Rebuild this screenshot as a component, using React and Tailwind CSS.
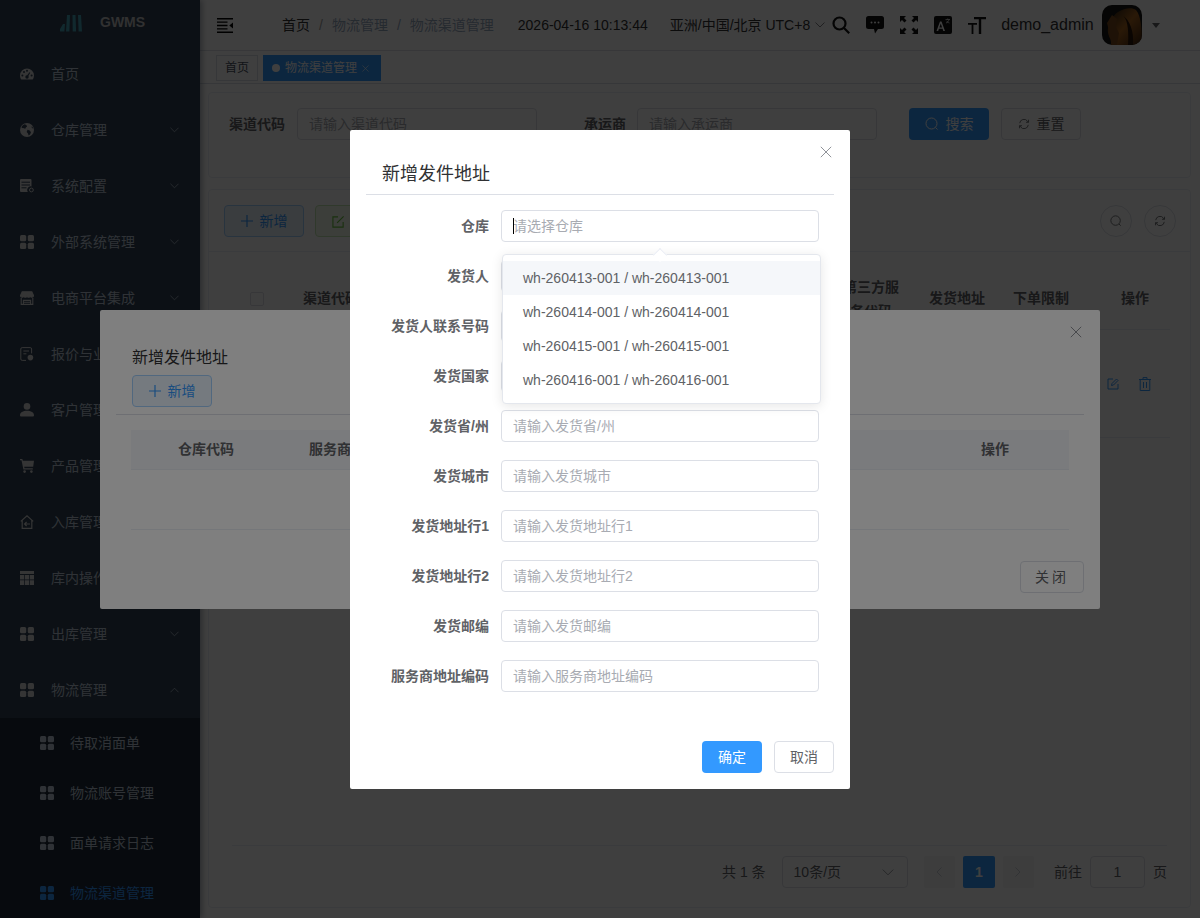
import React from "react";

const Grid = ({ className = "" }) => (
  <svg viewBox="0 0 14 14" className={className} fill="currentColor">
    <rect x="0" y="0" width="6.2" height="6.2" rx="1.5" />
    <rect x="7.8" y="0" width="6.2" height="6.2" rx="1.5" />
    <rect x="0" y="7.8" width="6.2" height="6.2" rx="1.5" />
    <rect x="7.8" y="7.8" width="6.2" height="6.2" rx="1.5" />
  </svg>
);
const Gauge = ({ className }) => (
  <svg viewBox="0 0 14 14" className={className}>
    <path fill="currentColor" d="M7 1.5a7 7 0 0 0-7 7c0 1.6.5 3 1.3 4h11.4A6.9 6.9 0 0 0 14 8.5a7 7 0 0 0-7-7z" />
    <g fill="#304155">
      <circle cx="2.4" cy="8.4" r="1" /><circle cx="4" cy="5" r="1" /><circle cx="7" cy="3.8" r="1" /><circle cx="11.6" cy="8.4" r="1" />
      <circle cx="7" cy="10" r="1.7" /><path d="M6.4 9.6l3-4.4.8.5-2.6 4.6z" />
    </g>
  </svg>
);
const Globe = ({ className }) => (
  <svg viewBox="0 0 14 14" className={className}>
    <circle cx="7" cy="7" r="7" fill="currentColor" />
    <path fill="#304155" d="M4.5 1.2C3 2 2 3 1.4 4.3c.8.7 1.7 1 2.5.8.5.6 1 .7 1.6.5l.3-1.2 1.3-.8L6.3 2zM7.5 6.8l2.2.6 1.3 1.8-1 2.4-1.4 1-.6-2.2-1.3-1.4zM11.5 3.5l1 .3.6 1.6-1.2-.5z" />
  </svg>
);
const Server = ({ className }) => (
  <svg viewBox="0 0 14 14" className={className}>
    <path fill="currentColor" d="M1 0h9.5a1 1 0 0 1 1 1v6.4a3.6 3.6 0 0 0-3.7 5.6H1a1 1 0 0 1-1-1V1a1 1 0 0 1 1-1z" />
    <path stroke="#304155" strokeWidth="1" d="M1.5 3.2h8.5M1.5 6h8.5M1.5 8.8h5" />
    <circle cx="11.4" cy="11" r="1.9" fill="none" stroke="currentColor" strokeWidth="1" />
  </svg>
);
const Shop = ({ className }) => (
  <svg viewBox="0 0 14 14" className={className} fill="none" stroke="currentColor" strokeWidth="1.1">
    <path fill="currentColor" d="M2.2.8h9.6L13.6 4.8a1.9 1.9 0 0 1-3.3.6 2 2 0 0 1-3.3 0 2 2 0 0 1-3.3 0A1.9 1.9 0 0 1 .4 4.8z" />
    <path d="M1.2 7v6.4h11.6V7M3.4 13V9.4h7.2V13M3.4 11.2h7.2" />
  </svg>
);
const Doc = ({ className }) => (
  <svg viewBox="0 0 14 14" className={className} fill="none" stroke="currentColor" strokeWidth="1">
    <path d="M6 13.4H2.2a1.4 1.4 0 0 1-1.4-1.4V2A1.4 1.4 0 0 1 2.200.6h8a1.4 1.4 0 0 1 1.400 1.400v4.400M3.400 4h5.600M3.400 6.800h3" />
    <circle cx="10.400" cy="10.600" r="2.800" fill="currentColor" stroke="none" />
  </svg>
);
const User = ({ className }) => (
  <svg viewBox="0 0 14 14" className={className} fill="currentColor">
    <circle cx="7" cy="3.400" r="3.300" />
    <path d="M0 12.200c0-2.800 3-4.400 7-4.400s7 1.600 7 4.400c0 1-.6 1.400-1.400 1.400H1.400C.6 13.600 0 13.200 0 12.200z" />
  </svg>
);
const Cart = ({ className }) => (
  <svg viewBox="0 0 14 14" className={className} fill="currentColor">
    <path d="M0 0h2.300l.6 1.800H14l-.8 6H4.200l.3 1.400h8.300v1.200H3.400L1.500 1.200H0z" />
    <circle cx="4.600" cy="12.600" r="1.300" /><circle cx="11.400" cy="12.600" r="1.300" />
  </svg>
);
const HomeIn = ({ className }) => (
  <svg viewBox="0 0 14 14" className={className} fill="none" stroke="currentColor" strokeWidth="1.200">
    <path d="M.8 6.400L7 .8l6.200 5.600M2.200 5.600v7.800h9.600V5.600" />
    <path d="M10 9H4.600M6.600 7l-2 2 2 2" />
  </svg>
);
const TableI = ({ className }) => (
  <svg viewBox="0 0 14 14" className={className} fill="currentColor">
    <path d="M0 0h14v3H0zM0 4h4.200v4.400H0zM4.900 4h4.200v4.400H4.900zM9.800 4H14v4.400H9.800zM0 9.200h4.200V14H0zM4.900 9.200h4.200V14H4.900zM9.800 9.200H14V14H9.800z" />
  </svg>
);
const Chevron = ({ up, className = "" }) => (
  <svg viewBox="0 0 10 6" className={className} fill="none" stroke="currentColor" strokeWidth="0.8">
    <path d={up ? "M.5 5.500L5 1l4.500 4.500" : "M.5.500L5 5 9.500.500"} />
  </svg>
);
const X = ({ className = "" }) => (
  <svg viewBox="0 0 12 12" className={className} fill="none" stroke="currentColor" strokeWidth="1">
    <path d="M.8.800l10.400 10.400M11.200.800L.8 11.200" />
  </svg>
);
const Plus = ({ className = "" }) => (
  <svg viewBox="0 0 12 12" className={className} fill="none" stroke="currentColor" strokeWidth="1.200">
    <path d="M6 0v12M0 6h12" />
  </svg>
);
const Search = ({ className = "" }) => (
  <svg viewBox="0 0 14 14" className={className} fill="none" stroke="currentColor" strokeWidth="1">
    <circle cx="6.500" cy="6.500" r="5.500" /><path d="M10.500 10.500l2 2" />
  </svg>
);
const Refresh = ({ className = "" }) => (
  <svg viewBox="0 0 14 14" className={className} fill="none" stroke="currentColor" strokeWidth="1">
    <path d="M2 6a5 5 0 0 1 9-2.400l1 1.400M12 8a5 5 0 0 1-9 2.400L2 9" />
    <path d="M12.300 2v3h-3M1.700 12V9h3" />
  </svg>
);

const menu = [
  ["首页", Gauge, null],
  ["仓库管理", Globe, "d"],
  ["系统配置", Server, "d"],
  ["外部系统管理", Grid, "d"],
  ["电商平台集成", Shop, "d"],
  ["报价与业务", Doc, "d"],
  ["客户管理", User, "d"],
  ["产品管理", Cart, "d"],
  ["入库管理", HomeIn, "d"],
  ["库内操作", TableI, "d"],
  ["出库管理", Grid, "d"],
  ["物流管理", Grid, "u"],
];
const subs = ["待取消面单", "物流账号管理", "面单请求日志", "物流渠道管理"];

function Sidebar() {
  return (
    <aside className="w-[200px] h-[918px] shrink-0 bg-[#304155] overflow-hidden shadow-[2px_0_6px_rgba(0,21,41,0.35)] z-10">
      <div className="h-[46px] flex items-center pl-[60px] pb-[1px]">
        <svg viewBox="0 0 22 18" className="w-[22px] h-[18px]" fill="#45a5b8">
          <path d="M0 15l3-5h2l-.6 7.500H1.500A1.500 1.500 0 0 1 0 15zM7 1h3l-.6 16.500H6zM12.500 1h3l.6 16.500h-3.400zM18 1h3l1 16.500h-3.400z" />
        </svg>
        <span className="ml-[18px] text-[14px] font-bold text-[#c4c4c4]">GWMS</span>
      </div>
      {menu.map(([t, I, c]) => (
        <div key={t} className="h-[56px] flex items-center pl-[20px] pr-[21px] text-[14px] text-[#bfcbd9]">
          <I className="w-[14px] h-[14px] text-[#d4d4d4] shrink-0" />
          <span className="ml-[17px] flex-1 whitespace-nowrap">{t}</span>
          {c && <Chevron up={c === "u"} className="w-[9px] h-[6px]" />}
        </div>
      ))}
      <div className="bg-[#1c2838]">
        {subs.map((t, i) => (
          <div key={t} className={`h-[50px] flex items-center pl-[40px] text-[14px] ${i === 3 ? "text-[#3399ff]" : "text-[#bfcbd9]"}`}>
            <Grid className="w-[14px] h-[14px] shrink-0" />
            <span className="ml-[16px]">{t}</span>
          </div>
        ))}
      </div>
    </aside>
  );
}

function TopBar() {
  return (
    <header className="h-[51px] border-b border-[#dcdfe6] flex items-center text-[14px] text-[#97a8be] shrink-0 bg-white">
      <svg viewBox="0 0 16 15" className="ml-[17px] w-[16px] h-[15px] text-black" fill="currentColor">
        <path d="M0 0h16v1.400H0zM0 6.800h10.500v1.400H0zM0 3.400h10.500v1.400H0zM0 10.200h10.500v1.400H0zM0 13.600h16V15H0zM16 4.600v5.800l-3.700-2.900z" />
      </svg>
      <span className="ml-[49px] text-[#303133] whitespace-nowrap">首页</span>
      <span className="ml-[9px] text-[#a0a0a0]">/</span>
      <span className="ml-[9px] whitespace-nowrap">物流管理</span>
      <span className="ml-[9px]">/</span>
      <span className="ml-[9px] whitespace-nowrap">物流渠道管理</span>
      <span className="ml-[24px] text-[#303133] whitespace-nowrap">2026-04-16 10:13:44</span>
      <span className="ml-[22px] text-[#303133] whitespace-nowrap">亚洲/中国/北京 UTC+8</span>
      <Chevron className="ml-[5px] w-[10px] h-[6px] text-[#606266]" />
      <svg viewBox="0 0 18 18" className="ml-[7px] w-[18px] h-[18px] text-[#111]" fill="none" stroke="currentColor" strokeWidth="2.200">
        <circle cx="7.500" cy="7.500" r="6" /><path d="M12 12l5.200 5.200" />
      </svg>
      <svg viewBox="0 0 18 18" className="ml-[16px] w-[18px] h-[18px] text-[#111]">
        <path fill="currentColor" d="M2.500 0h13A2.500 2.500 0 0 1 18 2.500v8a2.500 2.500 0 0 1-2.500 2.500H12l-3 4.500-1-4.500H2.500A2.500 2.500 0 0 1 0 10.500v-8A2.500 2.500 0 0 1 2.500 0z" />
        <circle cx="5.500" cy="6.500" r="1" fill="#fff" /><circle cx="9" cy="6.500" r="1" fill="#fff" /><circle cx="12.500" cy="6.500" r="1" fill="#fff" />
      </svg>
      <svg viewBox="0 0 18 18" className="ml-[16px] w-[18px] h-[18px] text-[#111]" fill="currentColor">
        <path d="M0 0h6L4 2l2.500 2.500-2 2L2 4 0 6zM18 0v6l-2-2-2.500 2.500-2-2L14 2l-2-2zM0 18v-6l2 2 2.500-2.500 2 2L4 16l2 2zM18 18h-6l2-2-2.500-2.500 2-2L16 14l2-2z" />
      </svg>
      <svg viewBox="0 0 18 18" className="ml-[16px] w-[18px] h-[18px] text-[#111]">
        <rect width="18" height="18" rx="2" fill="currentColor" />
        <path d="M2.500 15L6 5.500h1.500L11 15H9.300l-.7-2.200H4.900L4.200 15zM5.400 11.400h2.700L6.750 7.500z" fill="#fff" />
        <path d="M11.500 3.500h4.500M13.700 2.500v1M15 3.500c-.4 2-1.600 3-3 3.500M12.500 4.800c.5 1 1.500 1.800 3 2.200" stroke="#fff" strokeWidth="0.700" fill="none" />
      </svg>
      <svg viewBox="0 0 18 18" className="ml-[16px] w-[18px] h-[18px] text-[#111]" fill="currentColor">
        <path d="M6 1h12v2.200h-4.800V18h-2.400V3.200H6zM0 7h9v1.800H5.400V18H3.600V8.800H0z" />
      </svg>
      <span className="ml-[15px] text-[16px] text-[#303133] whitespace-nowrap">demo_admin</span>
      <svg viewBox="0 0 40 40" className="ml-[8px] w-[40px] h-[40px] rounded-[10px] shrink-0">
        <defs>
          <linearGradient id="lion" x1="0" y1="0" x2="1" y2="1">
            <stop offset="0" stopColor="#1a1510" />
            <stop offset="0.5" stopColor="#a8641f" />
            <stop offset="1" stopColor="#3a1e0c" />
          </linearGradient>
        </defs>
        <rect width="40" height="40" fill="#141414" />
        <path d="M14 40C10 32 3 30 7 20c2-4 3-9 9-13C22 3 30 2 34 5c5 6 6 18 6 35z" fill="url(#lion)" />
        <path d="M5 18l5-8 5 4-1 8 3 6-2 12H9c1-7-4-8-2-14z" fill="#7a4a1c" />
        <path d="M20 10c5 3 7 12 6 30h5c1-14-3-25-11-30z" fill="#2a1508" />
      </svg>
      <span className="ml-[10px] w-0 h-0 border-x-[4px] border-x-transparent border-t-[5px] border-t-[#606266]" />
    </header>
  );
}

function Tags() {
  return (
    <div className="h-[33px] border-b border-[#d8dce5] flex items-start pt-[4px] pl-[16px] gap-[5px] text-[12px] shrink-0 bg-white">
      <span className="h-[26px] w-[42px] border border-[#d8dce5] text-[#495060] flex items-center justify-center">首页</span>
      <span className="h-[26px] w-[118px] bg-[#3399ff] text-white flex items-center pl-[9px]">
        <span className="w-[8px] h-[8px] rounded-full bg-white" />
        <span className="ml-[5px]">物流渠道管理</span>
        <X className="ml-[5px] w-[7px] h-[7px]" />
      </span>
    </div>
  );
}

const Input = ({ ph, className = "" }) => (
  <input readOnly placeholder={ph} className={`h-[32px] border border-[#dcdfe6] rounded-[4px] px-[11px] text-[14px] bg-white outline-none placeholder:text-[#a8abb2] ${className}`} />
);

function SearchCard() {
  return (
    <div className="h-[86px] border border-[#ebeef5] rounded-[4px] flex items-start pt-[15px] pl-[20px] bg-white">
      <span className="h-[32px] leading-[32px] text-[14px] font-bold text-[#606266]">渠道代码</span>
      <Input ph="请输入渠道代码" className="ml-[12px] w-[240px]" />
      <span className="ml-[47px] h-[32px] leading-[32px] text-[14px] font-bold text-[#606266]">承运商</span>
      <Input ph="请输入承运商" className="ml-[11px] w-[240px]" />
      <button className="ml-[32px] w-[80px] h-[32px] bg-[#3399ff] rounded-[4px] text-white text-[14px] flex items-center justify-center gap-[7px]">
        <Search className="w-[14px] h-[14px]" />搜索
      </button>
      <button className="ml-[12px] w-[80px] h-[32px] border border-[#dcdfe6] rounded-[4px] text-[#606266] text-[14px] flex items-center justify-center gap-[7px]">
        <Refresh className="w-[12px] h-[12px]" />重置
      </button>
    </div>
  );
}

const AddBtn = ({ className = "" }) => (
  <button className={`w-[80px] h-[32px] bg-[#ebf5ff] border border-[#a3d1ff] rounded-[4px] text-[#3399ff] text-[14px] flex items-center justify-center gap-[7px] shrink-0 ${className}`}>
    <Plus className="w-[12px] h-[12px]" />新增
  </button>
);

function TableCard() {
  return (
    <div className="mt-[11px] h-[719px] border border-[#ebeef5] rounded-[4px] flex flex-col bg-white">
      <div className="h-[62px] border-b border-[#ebeef5] flex items-start pt-[15px] pl-[15px] pr-[14px] gap-[11px] shrink-0">
        <AddBtn />
        <button className="w-[80px] h-[32px] bg-[#f0f9eb] border border-[#c2e7b0] rounded-[4px] text-[#67c23a] text-[14px] flex items-center justify-center gap-[6px]">
          <svg viewBox="0 0 14 14" className="w-[13px] h-[13px]" fill="none" stroke="currentColor" strokeWidth="1.200"><path d="M12 7.500V13H1V2h5.500M5.500 8.500L12.500 1.500" /></svg>修改
        </button>
        <div className="ml-auto flex gap-[12px]">
          <span className="w-[32px] h-[32px] rounded-full border border-[#dcdfe6] flex items-center justify-center text-[#606266]"><Search className="w-[12px] h-[12px]" /></span>
          <span className="w-[32px] h-[32px] rounded-full border border-[#dcdfe6] flex items-center justify-center text-[#606266]"><Refresh className="w-[12px] h-[12px]" /></span>
        </div>
      </div>
      <div className="mt-[16px] ml-[23px] w-[938px] text-[14px]">
        <div className="h-[62px] border-b border-[#ebeef5] flex items-center font-bold text-[#606266]">
          <span className="ml-[18px] w-[14px] h-[14px] border border-[#dcdfe6] rounded-[2px] bg-white" />
          <span className="ml-[39px] w-[540px]">渠道代码</span>
          <span className="w-[56px] text-center leading-[24px] pt-[1px]">第三方服务代码</span>
          <span className="ml-[30px] w-[54px] text-center whitespace-nowrap">发货地址</span>
          <span className="ml-[30px] w-[54px] text-center whitespace-nowrap">下单限制</span>
          <span className="ml-[41px] w-[54px] text-center">操作</span>
        </div>
        <div className="h-[108px] border-b border-[#ebeef5] flex items-center justify-end pr-[19px] pb-[-2px] gap-[20px] text-[#3399ff]">
          <svg viewBox="0 0 12 12" className="w-[12px] h-[12px]" fill="none" stroke="currentColor" strokeWidth="1"><path d="M6 1H1v10h10V6M4.500 7.500L5 5.500 9.500 1l1.500 1.500L6.500 7z" /></svg>
          <svg viewBox="0 0 12 14" className="w-[12px] h-[14px]" fill="none" stroke="currentColor" strokeWidth="1"><path d="M0 2.500h12M4 2.500V.6h4v1.900M1.200 2.500v11h9.600v-11M4.500 5v6M7.500 5v6" /></svg>
        </div>
      </div>
      <div className="mt-auto mx-[23px] h-[62px] border-t border-[#ebeef5] flex items-start pt-[10px] text-[14px] text-[#606266]">
        <span className="ml-[490px] h-[32px] leading-[32px] whitespace-nowrap">共 1 条</span>
        <span className="ml-[16px] w-[128px] h-[32px] border border-[#dcdfe6] rounded-[4px] flex items-center justify-between pl-[11px] pr-[13px]">10条/页<Chevron className="w-[12px] h-[7px] text-[#909399]" /></span>
        <span className="ml-[16px] w-[32px] h-[32px] bg-[#f4f4f5] rounded-[2px] flex items-center justify-center text-[#c0c4cc]"><Chevron up className="w-[10px] h-[6px] -rotate-90" /></span>
        <span className="ml-[8px] w-[32px] h-[32px] bg-[#3399ff] rounded-[2px] flex items-center justify-center text-white font-bold">1</span>
        <span className="ml-[8px] w-[32px] h-[32px] bg-[#f4f4f5] rounded-[2px] flex items-center justify-center text-[#c0c4cc]"><Chevron up className="w-[10px] h-[6px] rotate-90" /></span>
        <span className="ml-[20px] h-[32px] leading-[32px] whitespace-nowrap">前往</span>
        <span className="ml-[8px] w-[56px] h-[32px] border border-[#dcdfe6] rounded-[4px] flex items-center justify-center">1</span>
        <span className="ml-[8px] h-[32px] leading-[32px]">页</span>
      </div>
    </div>
  );
}

function MiddleDialog() {
  return (
    <div className="absolute left-[100px] top-[310px] w-[1000px] h-[299px] bg-white rounded-[2px] flex flex-col">
      <button className="absolute right-[18px] top-[16px] text-[#909399]"><X className="w-[12px] h-[12px]" /></button>
      <div className="mx-[16px] h-[105px] px-[16px] pt-[37px] border-b border-[#dcdfe6] shrink-0">
        <div className="text-[16px] leading-[22px] text-[#303133]">新增发件地址</div>
        <AddBtn className="mt-[6px]" />
      </div>
      <div className="mx-[31px] mt-[15px] text-[14px] font-bold text-[#606266]">
        <div className="h-[40px] bg-[#f5f7fa] border-b border-[#ebeef5] flex items-center">
          <span className="w-[150px] text-center">仓库代码</span>
          <span className="w-[154px] text-center">服务商地址编码</span>
          <span className="ml-auto w-[148px] text-center">操作</span>
        </div>
        <div className="h-[60px] border-b border-[#ebeef5]" />
      </div>
      <div className="mt-[31px] px-[16px] flex justify-end">
        <button className="w-[64px] h-[32px] border border-[#dcdfe6] rounded-[4px] bg-white text-[14px] text-[#606266] tracking-[3px]">关闭</button>
      </div>
    </div>
  );
}

const rows = [
  ["仓库", "请选择仓库"],
  ["发货人", "请输入发货人"],
  ["发货人联系号码", "请输入发货人联系号码"],
  ["发货国家", "请选择发货国家"],
  ["发货省/州", "请输入发货省/州"],
  ["发货城市", "请输入发货城市"],
  ["发货地址行1", "请输入发货地址行1"],
  ["发货地址行2", "请输入发货地址行2"],
  ["发货邮编", "请输入发货邮编"],
  ["服务商地址编码", "请输入服务商地址编码"],
];
const options = ["wh-260413-001", "wh-260414-001", "wh-260415-001", "wh-260416-001"];

function TopDialog() {
  return (
    <div className="absolute left-[350px] top-[130px] w-[500px] h-[659px] bg-white rounded-[2px]">
      <button className="absolute right-[18px] top-[16px] text-[#909399]"><X className="w-[12px] h-[12px]" /></button>
      <div className="mx-[16px] h-[65px] px-[16px] pt-[32px] border-b border-[#dcdfe6]">
        <div className="text-[18px] leading-[24px] text-[#303133]">新增发件地址</div>
      </div>
      <div className="pt-[15px] flex flex-col gap-[18px]">
        {rows.map(([l, p], i) => (
          <div key={l} className="flex items-center h-[32px]">
            <label className="w-[139px] text-right text-[14px] font-bold text-[#606266] whitespace-nowrap">{l}</label>
            <div className="relative ml-[12px] w-[318px]">
              <Input ph={p} className={`w-full ${i === 0 ? "border-[#3399ff]" : ""}`} />
              {i === 0 && <span className="absolute left-[12px] top-[8px] w-[1px] h-[16px] bg-black" />}
            </div>
          </div>
        ))}
      </div>
      <div className="mt-[49px] pr-[16px] flex justify-end gap-[12px]">
        <button className="w-[60px] h-[32px] rounded-[4px] bg-[#3399ff] text-white text-[14px]">确定</button>
        <button className="w-[60px] h-[32px] rounded-[4px] border border-[#dcdfe6] text-[#606266] text-[14px]">取消</button>
      </div>
      <div className="absolute left-[152px] top-[124px] w-[319px] h-[150px] bg-white border border-[#e4e7ed] rounded-[4px] shadow-[0_2px_12px_rgba(0,0,0,0.1)] py-[6px] text-[14px] text-[#606266]">
        <span className="absolute left-[152px] -top-[5px] w-[10px] h-[10px] bg-white rotate-45 border-l border-t border-[#ebeef5]" />
        {options.map((o, i) => (
          <div key={o} className={`h-[34px] leading-[34px] px-[20px] ${i === 0 ? "bg-[#f5f7fa]" : ""}`}>{o} / {o}</div>
        ))}
      </div>
    </div>
  );
}

export default function App() {
  return (
    <div className="relative w-[1200px] h-[918px] overflow-hidden bg-white flex font-['Liberation_Sans','Noto_Sans_CJK_SC',sans-serif]">
      <Sidebar />
      <main className="flex-1 flex flex-col min-w-0">
        <TopBar />
        <Tags />
        <div className="pl-[8px] pr-[9px] pt-[8px]">
          <SearchCard />
          <TableCard />
        </div>
      </main>
      <div className="absolute inset-0 z-20 bg-black/50" />
      <div className="absolute inset-0 z-30"><MiddleDialog /></div>
      <div className="absolute inset-0 z-40 bg-black/50" />
      <div className="absolute inset-0 z-50"><TopDialog /></div>
    </div>
  );
}
